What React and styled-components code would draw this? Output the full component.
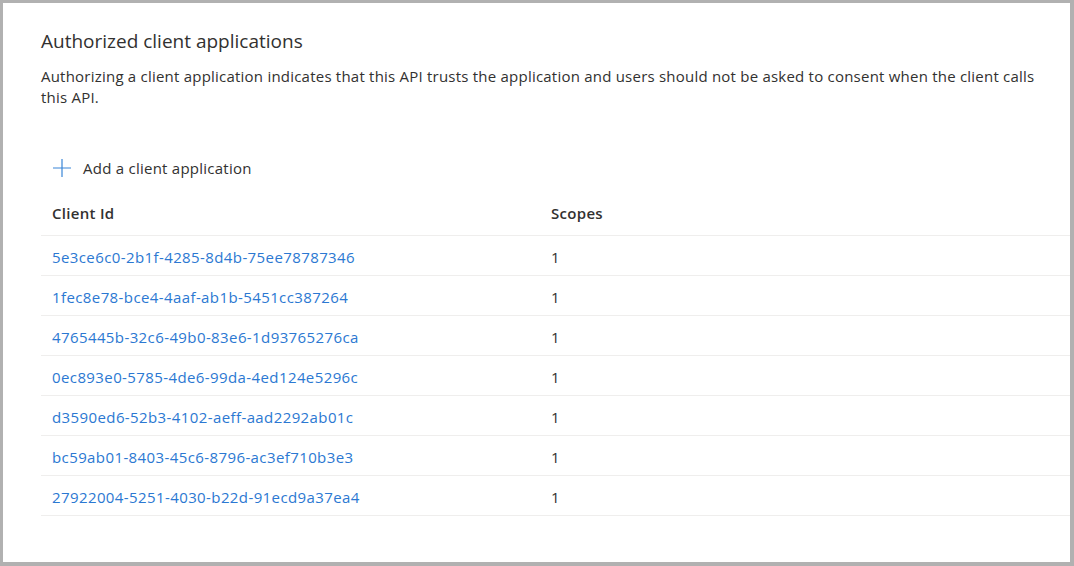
import styled, { createGlobalStyle } from 'styled-components';

const GlobalStyle = createGlobalStyle`
  html, body {
    margin: 0;
    padding: 0;
    background: #ffffff;
  }
  body {
    font-family: "Open Sans", "Noto Sans", "Liberation Sans", sans-serif;
    color: #323130;
  }
`;

const Frame = styled.div`
  box-sizing: border-box;
  width: 1074px;
  height: 566px;
  border-style: solid;
  border-color: #b1b1b1;
  border-width: 3px 4px 4px 3px;
  background: #ffffff;
  padding: 26px 0 0 38px;
  overflow: hidden;
`;

const Header = styled.div`
  padding-right: 30px;
`;

const Title = styled.h2`
  margin: 0;
  font-size: 19px;
  line-height: 24px;
  font-weight: 400;
  color: #323130;
`;

const Description = styled.p`
  margin: 13px 0 0;
  font-size: 15px;
  letter-spacing: 0.22px;
  line-height: 21px;
  color: #323130;
`;

const AddButton = styled.button`
  display: flex;
  align-items: center;
  gap: 11px;
  margin: 44px 0 0;
  padding: 0 0 0 11px;
  height: 32px;
  border: none;
  background: transparent;
  font: inherit;
  font-size: 15px;
  letter-spacing: 0.25px;
  color: #323130;
  cursor: pointer;
`;

const Table = styled.div`
  margin-top: 6px;
  display: flex;
  flex-direction: column;
`;

const Row = styled.div`
  display: grid;
  grid-template-columns: 499px 1fr;
  align-items: center;
  box-sizing: border-box;
  height: ${(p) => (p.$head ? '46px' : '40px')};
  padding-top: ${(p) => (p.$head ? '0' : '3px')};
  border-bottom: 1px solid #efeeed;
`;

const Cell = styled.div`
  padding-left: 11px;
  font-size: 15px;
  letter-spacing: 0.3px;
  font-weight: ${(p) => (p.$head ? 600 : 400)};
  color: #323130;
  white-space: nowrap;
`;

const Link = styled.a`
  color: #2b78d2;
  text-decoration: none;
  letter-spacing: 0.4px;
`;

const PlusIcon = () => (
  <svg width="20" height="20" viewBox="0 0 20 20" aria-hidden="true">
    <path d="M10 1v18M1 10h18" stroke="#3a86d8" strokeWidth="1.2" fill="none" />
  </svg>
);

const clients = [
  '5e3ce6c0-2b1f-4285-8d4b-75ee78787346',
  '1fec8e78-bce4-4aaf-ab1b-5451cc387264',
  '4765445b-32c6-49b0-83e6-1d93765276ca',
  '0ec893e0-5785-4de6-99da-4ed124e5296c',
  'd3590ed6-52b3-4102-aeff-aad2292ab01c',
  'bc59ab01-8403-45c6-8796-ac3ef710b3e3',
  '27922004-5251-4030-b22d-91ecd9a37ea4',
];

const App = () => (
  <>
    <GlobalStyle />
    <Frame>
      <Header>
        <Title>Authorized client applications</Title>
        <Description>
          Authorizing a client application indicates that this API trusts the application and users
          should not be asked to consent when the client calls this API.
        </Description>
      </Header>
      <AddButton>
        <PlusIcon />
        Add a client application
      </AddButton>
      <Table>
        <Row $head>
          <Cell $head>Client Id</Cell>
          <Cell $head>Scopes</Cell>
        </Row>
        {clients.map((id) => (
          <Row key={id}>
            <Cell>
              <Link href="#">{id}</Link>
            </Cell>
            <Cell>1</Cell>
          </Row>
        ))}
      </Table>
    </Frame>
  </>
);

export default App;
